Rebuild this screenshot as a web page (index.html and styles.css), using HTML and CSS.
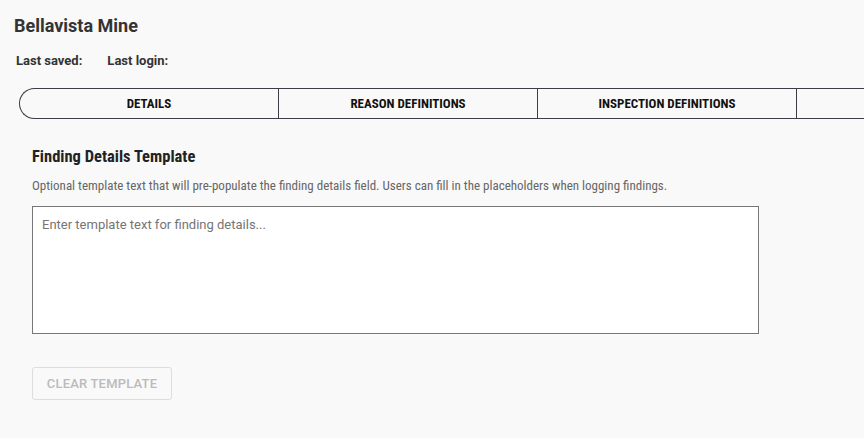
FILE: index.html
```html
<!DOCTYPE html>
<html>
<head>
<meta charset="utf-8">
<link rel="stylesheet" href="styles.css">
</head>
<body>
<div class="page">
  <h1 class="title">Bellavista Mine</h1>
  <div class="meta">
    <span class="meta-item">Last saved:</span>
    <span class="meta-item">Last login:</span>
  </div>
  <nav class="tabs">
    <div class="tab">DETAILS</div>
    <div class="tab">REASON DEFINITIONS</div>
    <div class="tab">INSPECTION DEFINITIONS</div>
    <div class="tab"></div>
  </nav>
  <section class="section">
    <h2 class="section-title">Finding Details Template</h2>
    <p class="section-desc">Optional template text that will pre-populate the finding details field. Users can fill in the placeholders when logging findings.</p>
    <textarea class="template-input" placeholder="Enter template text for finding details..."></textarea>
    <button class="btn-clear" disabled>CLEAR TEMPLATE</button>
  </section>
</div>
</body>
</html>
```

FILE: styles.css
```css
html, body {
  margin: 0;
  padding: 0;
  background: #f9f9f9;
  overflow: hidden;
}
body {
  font-family: Roboto, "Liberation Sans", sans-serif;
  color: #333;
}
.page {
  padding: 14px 0 0 14px;
}
.title {
  margin: 0;
  font-size: 18px;
  font-weight: 700;
  line-height: 24px;
  color: #333;
}
.meta {
  display: flex;
  gap: 25px;
  margin: 15px 0 0 2px;
  font-size: 13px;
  font-weight: 700;
  line-height: 16px;
  color: #333;
}
.tabs {
  display: flex;
  margin: 19px 0 0 5px;
  width: 1100px;
  height: 31px;
  border: 1px solid #3c3c46;
  border-right: none;
  border-radius: 16px 0 0 16px;
  box-sizing: border-box;
}
.tab {
  flex: 0 0 259px;
  display: flex;
  align-items: center;
  justify-content: center;
  font-size: 13px;
  font-weight: 700;
  font-stretch: condensed;
  color: #111;
  border-right: 1px solid #3c3c46;
  box-sizing: border-box;
}
.tab:first-child { flex-basis: 259px; }
.section {
  padding: 28px 0 0 18px;
}
.section-title {
  margin: 0;
  font-size: 16.5px;
  font-weight: 700;
  font-stretch: condensed;
  line-height: 20px;
  color: #222;
}
.section-desc {
  margin: 11px 0 0;
  font-size: 13px;
  line-height: 16px;
  font-stretch: condensed;
  color: #666;
}
.template-input {
  display: block;
  margin-top: 12px;
  width: 727px;
  height: 128px;
  box-sizing: border-box;
  border: 1px solid #777;
  border-radius: 0;
  background: #fff;
  padding: 9px 9px;
  font-family: Roboto, sans-serif;
  font-size: 13px;
  line-height: 18px;
  resize: none;
  outline: none;
}
.template-input::placeholder { color: #757575; }
.btn-clear {
  display: block;
  margin-top: 33px;
  width: 140px;
  height: 33px;
  border: 1px solid #ddd;
  border-radius: 3px;
  background: transparent;
  font-family: Roboto, sans-serif;
  font-size: 13px;
  font-weight: 500;
  color: #bbb;
  letter-spacing: 0.2px;
}
```
